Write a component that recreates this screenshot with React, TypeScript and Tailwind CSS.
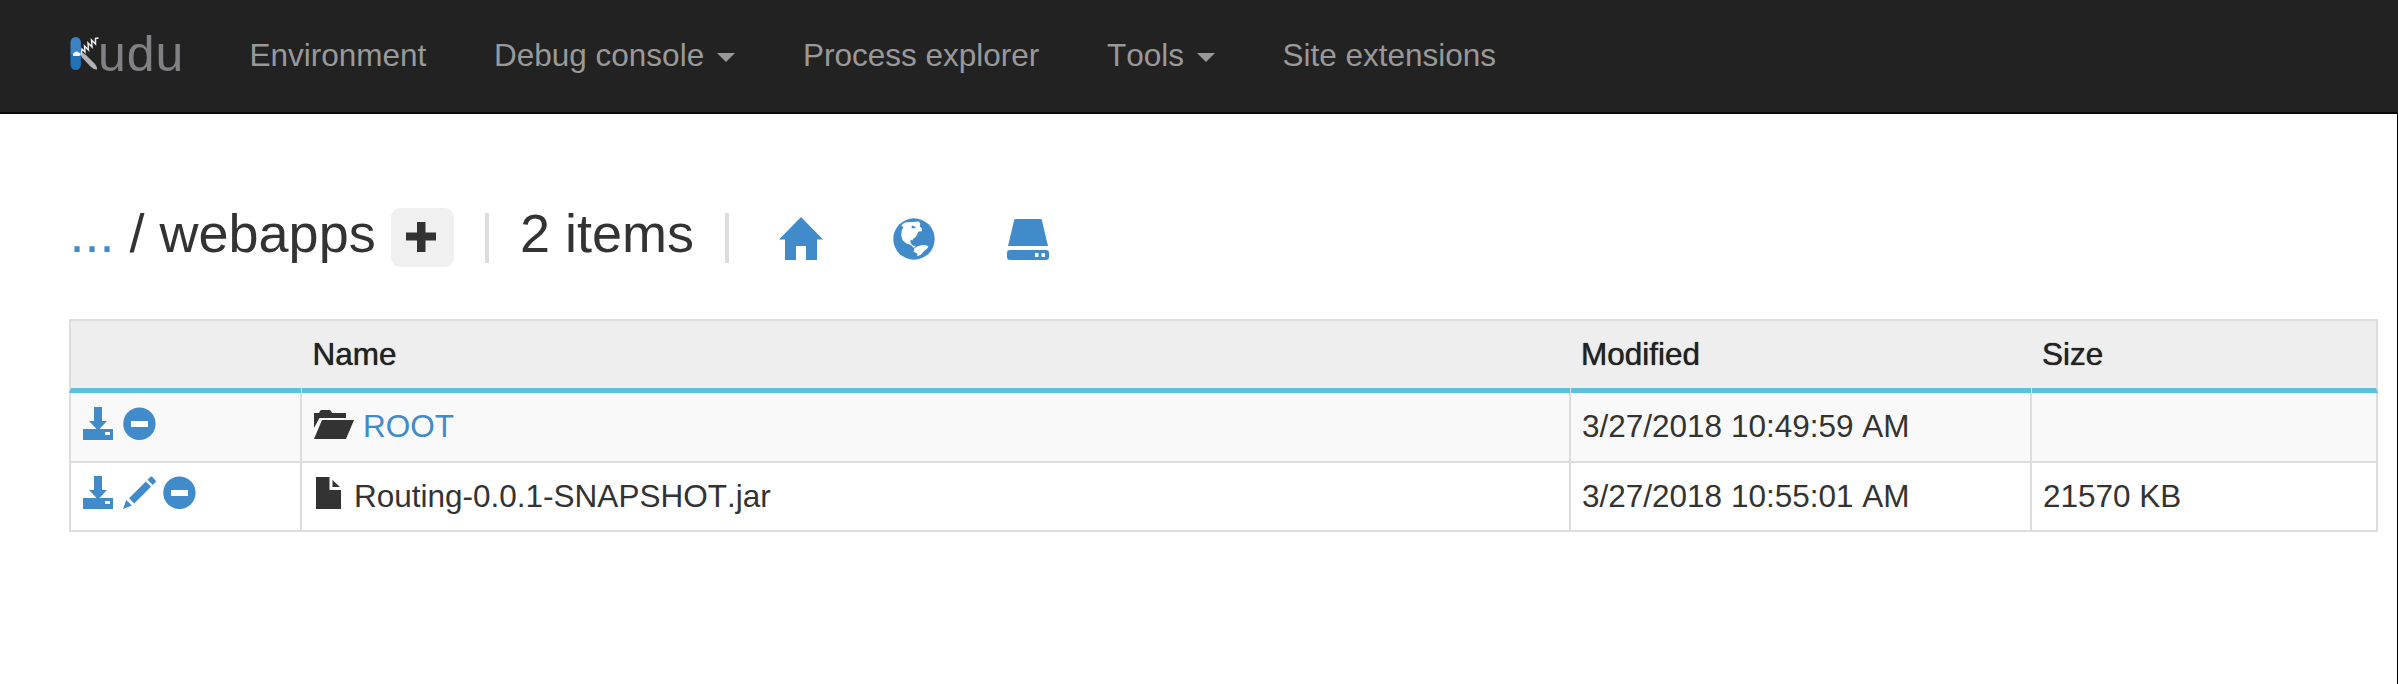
import React from "react";

const DownloadIcon = () => (
  <svg className="h-[33px] w-[30px] shrink-0" viewBox="0 0 30 33" fill="currentColor">
    <path d="M11 0h8v14H24l-7.500 8H30v11H0V22h13.500L6 14h5z" />
    <path className="text-white" d="M22 25h5v3h-5z" fill="currentColor" />
  </svg>
);

const RemoveIcon = () => (
  <svg className="h-[33px] w-[33px] shrink-0" viewBox="0 0 33 33">
    <circle cx="16.4" cy="16.7" r="16.2" fill="currentColor" />
    <path d="M8 14h17v6H8z" fill="#fff" />
  </svg>
);

const PencilIcon = () => (
  <svg className="h-[33px] w-[33px] shrink-0" viewBox="0 0 33 33" fill="currentColor">
    <path d="M27.6 .8q.8-.8 1.6 0l3.4 3.6q.7 .8 0 1.5L29.8 9 24.5 3.8zM22.8 5.6 28 10.800 11.200 27.400 6 22.200zM3.200 24 8.800 29.600 0 33z" />
  </svg>
);

const FolderIcon = () => (
  <svg className="h-[29px] w-[40px] shrink-0" viewBox="0 0 40 29" fill="currentColor">
    <path d="M0 3h5l1-2q.6-1 1.700-1h7.600q1 0 1.700 1l1 2h14v5H5.500L0 18zM8 10h32l-8 19H0z" />
  </svg>
);

const FileIcon = () => (
  <svg className="h-[32px] w-[25px] shrink-0" viewBox="0 0 25 32" fill="currentColor">
    <path d="M0 0h13.500v13H25v19H0zM16.500 3v7H24z" />
  </svg>
);

const HomeIcon = () => (
  <svg className="h-[43px] w-[44px]" viewBox="0 0 44 43" fill="currentColor">
    <path d="M22 0 44 22.500H38V43H27V29H17V43H6V22.500H0z" />
  </svg>
);

const GlobeIcon = () => (
  <svg className="h-[42px] w-[42px]" viewBox="0 0 42 42">
    <circle cx="21" cy="21" r="20.700" fill="currentColor" />
    <path
      fill="#fff"
      d="M9.500 6 13 4.300 20 4 26 3.500 27.300 6 26.700 8.300 28.700 10.300 29 13.300 25.500 13.500 24.300 16.300 22.700 19 20.300 20.500 19.500 22.500 17.800 21.500 17.300 24 18.800 26.800 22.800 28.500 20.500 29.800 18 27 13.500 25.500 9.700 22.500 8.300 17.800 8.700 12.500 10.500 9.300 8.500 8z M24.300 28.500 28 27.300 32 27 35.500 28.300 33.700 31 31.300 32.700 28 36.500 24.500 38.300 24 35.500 20.700 33.700 21.300 30.500z"
    />
    <path d="M19 7.500 23 9 21 10.500 18.500 10z" fill="currentColor" />
  </svg>
);

const DriveIcon = () => (
  <svg className="h-[41px] w-[42px]" viewBox="0 0 42 41" fill="currentColor">
    <path d="M8.500 0h25q1 0 1.300 1L41 27H1L7.200 1q.3-1 1.300-1zM3 31h36q3 0 3 3v4q0 3-3 3H3q-3 0-3-3v-4q0-3 3-3zm25 3v4h3.500v-4zm6.500 0v4H38v-4z" />
  </svg>
);

const Caret = () => (
  <span className="mt-[5px] ml-[13px] border-x-9 border-t-9 border-x-transparent border-t-[#999]" />
);

const Logo = () => (
  <a className="flex h-[76px] w-[180px] shrink-0 items-start pt-[17px]">
    <svg className="mt-[19px] h-[36px] w-[31px] shrink-0" viewBox="0 0 31 36">
      <path d="M1.500 18V6.200a5.200 5.200 0 0 1 10.400 0V18z" fill="#3c83c6" />
      <path d="M1.500 18h10.400v10.800a5.200 5.200 0 0 1-10.400 0z" fill="#2072b9" />
      <path d="M4.500 20a1.800 1.800 0 0 1 .8-3.200 2.200 2.200 0 0 1 4-.2 1.800 1.800 0 0 1 .9 3.400z" fill="#fff" />
      <path d="M12.500 16 17 19 26 28q2.500 3.500 2 5.500-2.500.5-6-2.500L12.500 21z" fill="#b3b3b5" />
      <path d="M12 19.500 13 13l3 3-.5-6 4 4-.5-7 4 4-.5-7 4 4 0-5.500 3-.5" fill="none" stroke="#e9e9e9" strokeWidth="1.500" />
    </svg>
    <span className="-ml-[2px] pt-[1px] text-[50px] leading-[72px] tracking-[0.900px] text-[#808184]">udu</span>
  </a>
);

const NavItem = ({ label, width, caret }: { label: string; width: string; caret?: boolean }) => (
  <li className={`flex shrink-0 items-center ${width}`}>
    {label}
    {caret && <Caret />}
  </li>
);

const HeaderCell = ({ label, className }: { label?: string; className: string }) => (
  <th className={`relative border-t-2 border-b-5 border-[#ddd] border-b-[#5bc0de] p-0 font-normal text-shadow-[0_0_1px_#222] ${className}`}>
    {label}
  </th>
);

const Notch = () => <span className="absolute right-0 -bottom-[5px] h-[5px] w-[1px] bg-[#ddd]" />;

const Row = ({ tools, name, modified, size, striped }: {
  tools: React.ReactNode;
  name: React.ReactNode;
  modified: string;
  size: string;
  striped?: boolean;
}) => {
  const cell = striped
    ? "border-r-2 border-b-2 border-[#ddd] p-0 pb-[2px]"
    : "border-r-2 border-b-2 border-[#ddd] p-0";
  return (
    <tr className={striped ? "h-[70px] bg-[#f9f9f9]" : "h-[69px] bg-white"}>
      <td className="border-x-2 border-b-2 border-[#ddd] p-0">{tools}</td>
      <td className={cell}>{name}</td>
      <td className={`${cell} pl-[11px]`}>{modified}</td>
      <td className={`${cell} pl-[11px]`}>{size}</td>
    </tr>
  );
};

export default function App() {
  return (
    <div className="flex h-[684px] w-[2398px] flex-col overflow-hidden bg-white font-['Liberation_Sans',Arial,sans-serif] text-[31.5px] leading-[45px] text-[#333] [font-kerning:none]">
      <nav className="flex h-[114px] shrink-0 border-b-2 border-[#080808] bg-[#222] pl-[69px] text-[#999]">
        <Logo />
        <ul className="flex h-[110px] pl-[0.500px] whitespace-nowrap">
          <NavItem label="Environment" width="w-[244.500px]" />
          <NavItem label="Debug console" width="w-[309px]" caret />
          <NavItem label="Process explorer" width="w-[304px]" />
          <NavItem label="Tools" width="w-[175.500px]" caret />
          <NavItem label="Site extensions" width="w-[220px]" />
        </ul>
      </nav>
      <main className="flex-1 border-r border-black pl-[69px]">
        <header className="flex h-[205px] items-start whitespace-pre pt-[88px] text-[54px] leading-[62px]">
          <div className="w-[322px] pl-[0.500px]">
            <a className="text-[#428bca]">...</a> / webapps
          </div>
          <button className="mt-[6px] flex h-[59px] w-[63px] items-center justify-center rounded-[9px] bg-[#f0f0f0] pr-[3px] pb-[2px]">
            <svg className="h-[30px] w-[30px]" viewBox="0 0 30 30" fill="#333">
              <path d="M11 0h8.500v10.500H30v8H19.500V30H11V18.500H0v-8h11z" />
            </svg>
          </button>
          <span className="mt-[11px] ml-[31px] h-[50px] w-[4px] bg-[#ddd]" />
          <span className="ml-[31px] w-[205px]">2 items</span>
          <span className="mt-[11px] h-[50px] w-[4px] bg-[#ddd]" />
          <div className="mt-[15px] ml-[50px] flex items-end text-[#428bca]">
            <HomeIcon />
            <span className="ml-[69.500px]"><GlobeIcon /></span>
            <span className="ml-[72px]"><DriveIcon /></span>
          </div>
        </header>
        <table className="w-[2309px] table-fixed border-separate border-spacing-0">
          <colgroup>
            <col className="w-[233px]" />
            <col className="w-[1269px]" />
            <col className="w-[461px]" />
            <col className="w-[346px]" />
          </colgroup>
          <thead>
            <tr className="h-[74px] bg-[#eee] text-left text-[#222]">
              <th className="relative border-t-2 border-b-5 border-l-2 border-[#ddd] border-b-[#5bc0de]"><Notch /></th>
              <th className="relative border-t-2 border-b-5 border-[#ddd] border-b-[#5bc0de] p-0 pl-[10.500px] font-normal text-shadow-[0_0_1px_#222]">Name<Notch /></th>
              <th className="relative border-t-2 border-b-5 border-[#ddd] border-b-[#5bc0de] p-0 pl-[10px] font-normal text-shadow-[0_0_1px_#222]">Modified<Notch /></th>
              <HeaderCell label="Size" className="border-r-2 pl-[10px]" />
            </tr>
          </thead>
          <tbody>
            <Row
              striped
              tools={<div className="flex gap-[10px] pb-[7px] pl-[12px] text-[#428bca]"><DownloadIcon /><RemoveIcon /></div>}
              name={<div className="flex items-start pl-[12px]"><span className="pt-[6px]"><FolderIcon /></span><a className="ml-[9px] text-[#428bca]">ROOT</a></div>}
              modified="3/27/2018 10:49:59 AM"
              size=""
            />
            <Row
              tools={<div className="flex pb-[8px] pl-[12px] text-[#428bca]"><DownloadIcon /><span className="ml-[10px]"><PencilIcon /></span><span className="ml-[7px]"><RemoveIcon /></span></div>}
              name={<div className="flex items-start pl-[14px]"><span className="pt-[3px]"><FileIcon /></span><span className="ml-[13px]">Routing-0.0.1-SNAPSHOT.jar</span></div>}
              modified="3/27/2018 10:55:01 AM"
              size="21570 KB"
            />
          </tbody>
        </table>
      </main>
    </div>
  );
}
